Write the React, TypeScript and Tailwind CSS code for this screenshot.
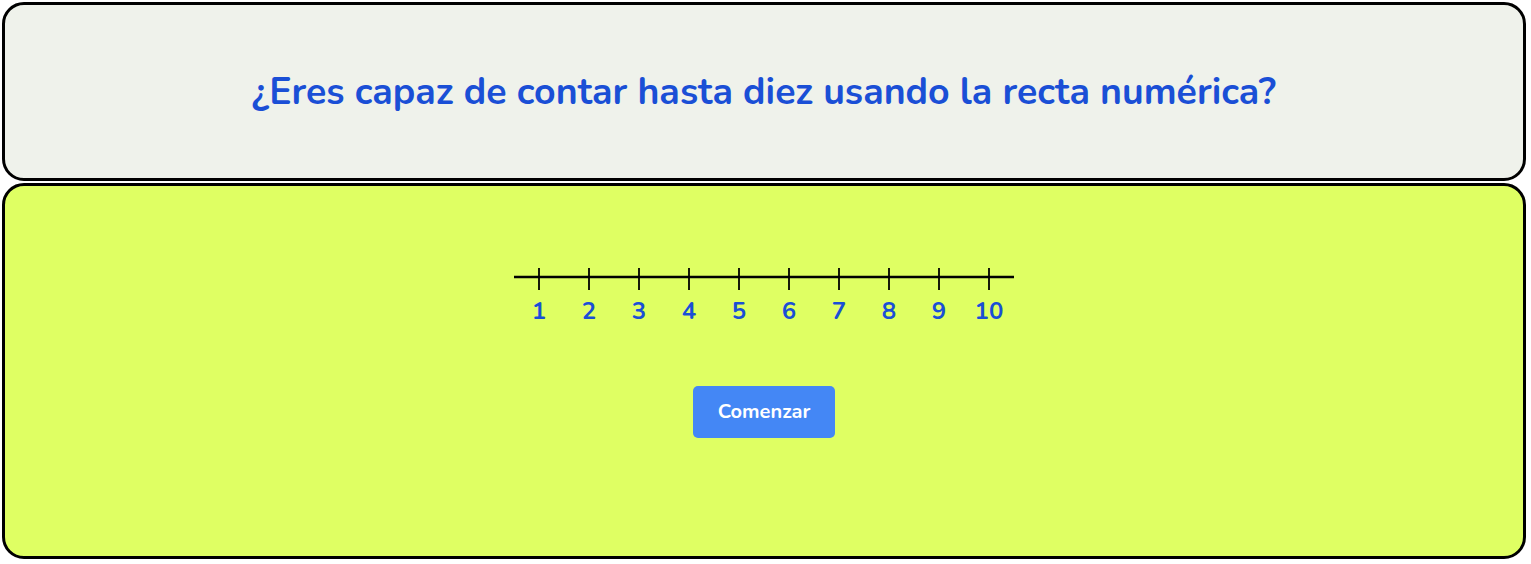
export default function App() {
  const numbers = [1, 2, 3, 4, 5, 6, 7, 8, 9, 10];

  return (
    <div
      className="w-[1531px] h-[564px] bg-white pl-[2px] pt-[2px]"
      style={{ fontFamily: "Nunito, Lato, 'Noto Sans', sans-serif" }}
    >
      <div className="w-[1524px] flex flex-col gap-[2px]">
        {/* question header */}
        <div className="h-[179px] rounded-[22px] border-[3px] border-black bg-[#eff2eb] flex items-center justify-center">
          <h1 className="text-[37.5px] font-bold text-[#1a4fd6] mt-[2px]">
            ¿Eres capaz de contar hasta diez usando la recta numérica?
          </h1>
        </div>

        {/* number line body */}
        <div className="h-[376px] rounded-[22px] border-[3px] border-black bg-[#dfff63] flex flex-col items-center pt-[82px]">
          <div className="w-[500px]">
            <svg width="500" height="23" viewBox="0 0 500 23" className="block">
              <line x1="0" y1="9" x2="500" y2="9" stroke="#000" strokeWidth="2.5" />
              {numbers.map((n, i) => (
                <line
                  key={n}
                  x1={25 + i * 50}
                  y1="0"
                  x2={25 + i * 50}
                  y2="22"
                  stroke="#000"
                  strokeWidth="1.8"
                />
              ))}
            </svg>
            <div className="flex mt-[5px]">
              {numbers.map((n) => (
                <div
                  key={n}
                  className="w-[50px] text-center text-[24px] leading-[30px] font-bold text-[#1a4fd6]"
                >
                  {n}
                </div>
              ))}
            </div>
          </div>

          <button className="mt-[60px] w-[142px] h-[52px] rounded-[5px] bg-[#4487f5] text-white text-[20px] font-bold">
            Comenzar
          </button>
        </div>
      </div>
    </div>
  );
}
